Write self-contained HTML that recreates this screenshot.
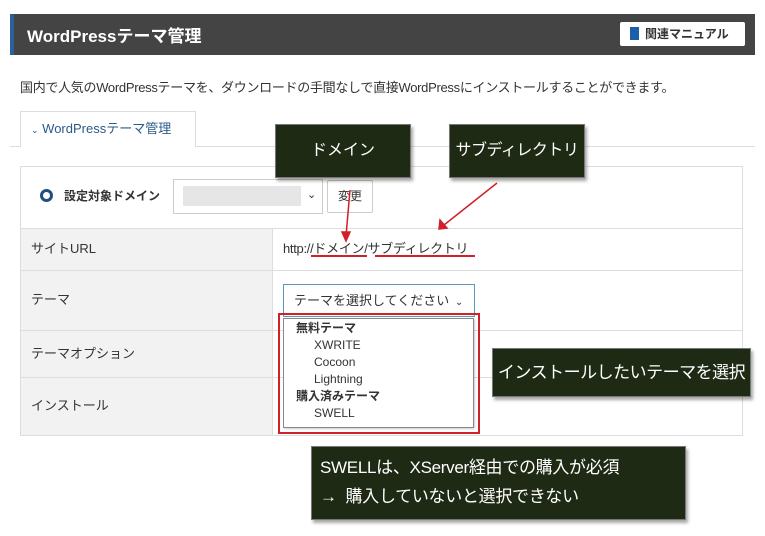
<!DOCTYPE html>
<html><head><meta charset="utf-8"><style>
body{margin:0;width:765px;height:536px;background:#fff;font-family:"Liberation Sans","Noto Sans CJK JP",sans-serif;position:relative;overflow:hidden;color:#333}
.a{position:absolute}
.hdr{left:10px;top:14px;width:745px;height:41px;background:#444;border-left:4px solid #2d5f9a;box-sizing:border-box}
.hdr h1{margin:0;color:#fff;font-size:17px;font-weight:bold;position:absolute;left:13px;top:8px}
.btn{left:620px;top:22px;width:125px;height:24px;background:#fff;border-radius:2px;font-size:12px;font-weight:bold;color:#333;line-height:24px}
.desc{left:20px;top:77px;font-size:13px;color:#333;letter-spacing:-0.3px}
.tab{left:20px;top:111px;width:176px;height:36px;border:1px solid #ddd;border-bottom:none;background:#fff;box-sizing:border-box;font-size:13px;color:#2a5a8a;line-height:34px;padding-left:10px}
.line{left:10px;top:146px;width:745px;height:1px;background:#ddd}
.tbl{left:20px;top:166px;width:723px;height:270px;border:1px solid #ddd;box-sizing:border-box}
.lab{left:21px;width:251px;background:#f2f2f2;font-size:13px;color:#333;box-sizing:border-box;padding-left:10px;border-top:1px solid #ddd}
.hl{left:21px;width:721px;height:1px;background:#ddd}
.cal{background:#1f2a15;color:#fff;box-shadow:2px 3px 3px rgba(0,0,0,.35);border:1px solid #777;box-sizing:border-box}
.red{background:#d0202a}
</style></head><body>
<div class="a hdr"><h1>WordPressテーマ管理</h1></div>
<div class="a btn"><span style="display:inline-block;width:9px;height:13px;background:#1f5ea8;margin:0 6px 0 10px;vertical-align:-2px"></span>関連マニュアル</div>
<div class="a desc">国内で人気のWordPressテーマを、ダウンロードの手間なしで直接WordPressにインストールすることができます。</div>
<div class="a line"></div>
<div class="a tab"><span style="font-size:9px">&#8964;</span> WordPressテーマ管理</div>
<div class="a tbl"></div>
<div class="a" style="left:40px;top:189px;width:7px;height:7px;border:3px solid #1f4f7f;border-radius:50%"></div>
<div class="a" style="left:64px;top:187px;font-size:12px;font-weight:bold">設定対象ドメイン</div>
<div class="a" style="left:173px;top:179px;width:150px;height:35px;border:1px solid #ccc;box-sizing:border-box;background:#fff"></div>
<div class="a" style="left:183px;top:186px;width:118px;height:20px;background:#e6e6e6"></div>
<div class="a" style="left:307px;top:188px;font-size:11px">&#8964;</div>
<div class="a" style="left:327px;top:180px;width:46px;height:33px;border:1px solid #ccc;box-sizing:border-box;border-radius:2px;font-size:12px;text-align:center;line-height:31px">変更</div>
<div class="a lab" style="top:228px;height:42px;line-height:40px">サイトURL</div>
<div class="a lab" style="top:270px;height:60px;line-height:58px">テーマ</div>
<div class="a lab" style="top:330px;height:47px;line-height:45px">テーマオプション</div>
<div class="a lab" style="top:377px;height:58px;line-height:56px">インストール</div>
<div class="a hl" style="top:228px"></div><div class="a hl" style="top:270px"></div><div class="a hl" style="top:330px"></div><div class="a hl" style="top:377px"></div>
<div class="a" style="left:272px;top:228px;width:1px;height:207px;background:#ddd"></div>
<div class="a" style="left:283px;top:238px;font-size:13px;letter-spacing:-0.3px">http://ドメイン/サブディレクトリ</div>
<div class="a red" style="left:311px;top:255px;width:56px;height:2px"></div>
<div class="a red" style="left:375px;top:255px;width:100px;height:2px"></div>
<div class="a" style="left:283px;top:284px;width:192px;height:33px;border:1px solid #5a9ab8;box-sizing:border-box;background:#fff;font-size:13px;line-height:31px;padding-left:10px;white-space:nowrap">テーマを選択してください <span style="font-size:10px;margin-left:2px">&#8964;</span></div>
<div class="a" style="left:278px;top:313px;width:202px;height:121px;border:2px solid #d0202a;box-sizing:border-box"></div>
<div class="a" style="left:283px;top:318px;width:191px;height:110px;border:1px solid #888;box-sizing:border-box;background:#fff;font-size:12px;line-height:17px;padding-top:1px;box-shadow:1px 1px 2px rgba(0,0,0,.2)">
<div style="padding-left:12px;font-weight:bold">無料テーマ</div>
<div style="padding-left:30px">XWRITE</div><div style="padding-left:30px">Cocoon</div><div style="padding-left:30px">Lightning</div>
<div style="padding-left:12px;font-weight:bold">購入済みテーマ</div><div style="padding-left:30px">SWELL</div></div>
<div class="a cal" style="left:275px;top:124px;width:136px;height:54px;font-size:16px;text-align:center;line-height:52px">ドメイン</div>
<div class="a cal" style="left:449px;top:124px;width:136px;height:54px;font-size:16px;text-align:center;line-height:52px;letter-spacing:-0.5px">サブディレクトリ</div>
<div class="a cal" style="left:492px;top:348px;width:259px;height:49px;font-size:17px;text-align:center;line-height:47px;letter-spacing:-0.5px">インストールしたいテーマを選択</div>
<div class="a cal" style="left:311px;top:446px;width:375px;height:74px;font-size:17px;line-height:29px;padding:6px 0 0 8px;letter-spacing:-0.3px">SWELLは、XServer経由での購入が必須<br>→&nbsp; 購入していないと選択できない</div>
<svg class="a" style="left:0;top:0" width="765" height="536"><g stroke="#d0202a" stroke-width="1.5" fill="#d0202a">
<line x1="350" y1="190" x2="346" y2="236"/><polygon points="342,232 350,232 346,241"/>
<line x1="497" y1="183" x2="444" y2="225"/><polygon points="440,220 447,228 439,229"/></g></svg>
</body></html>
